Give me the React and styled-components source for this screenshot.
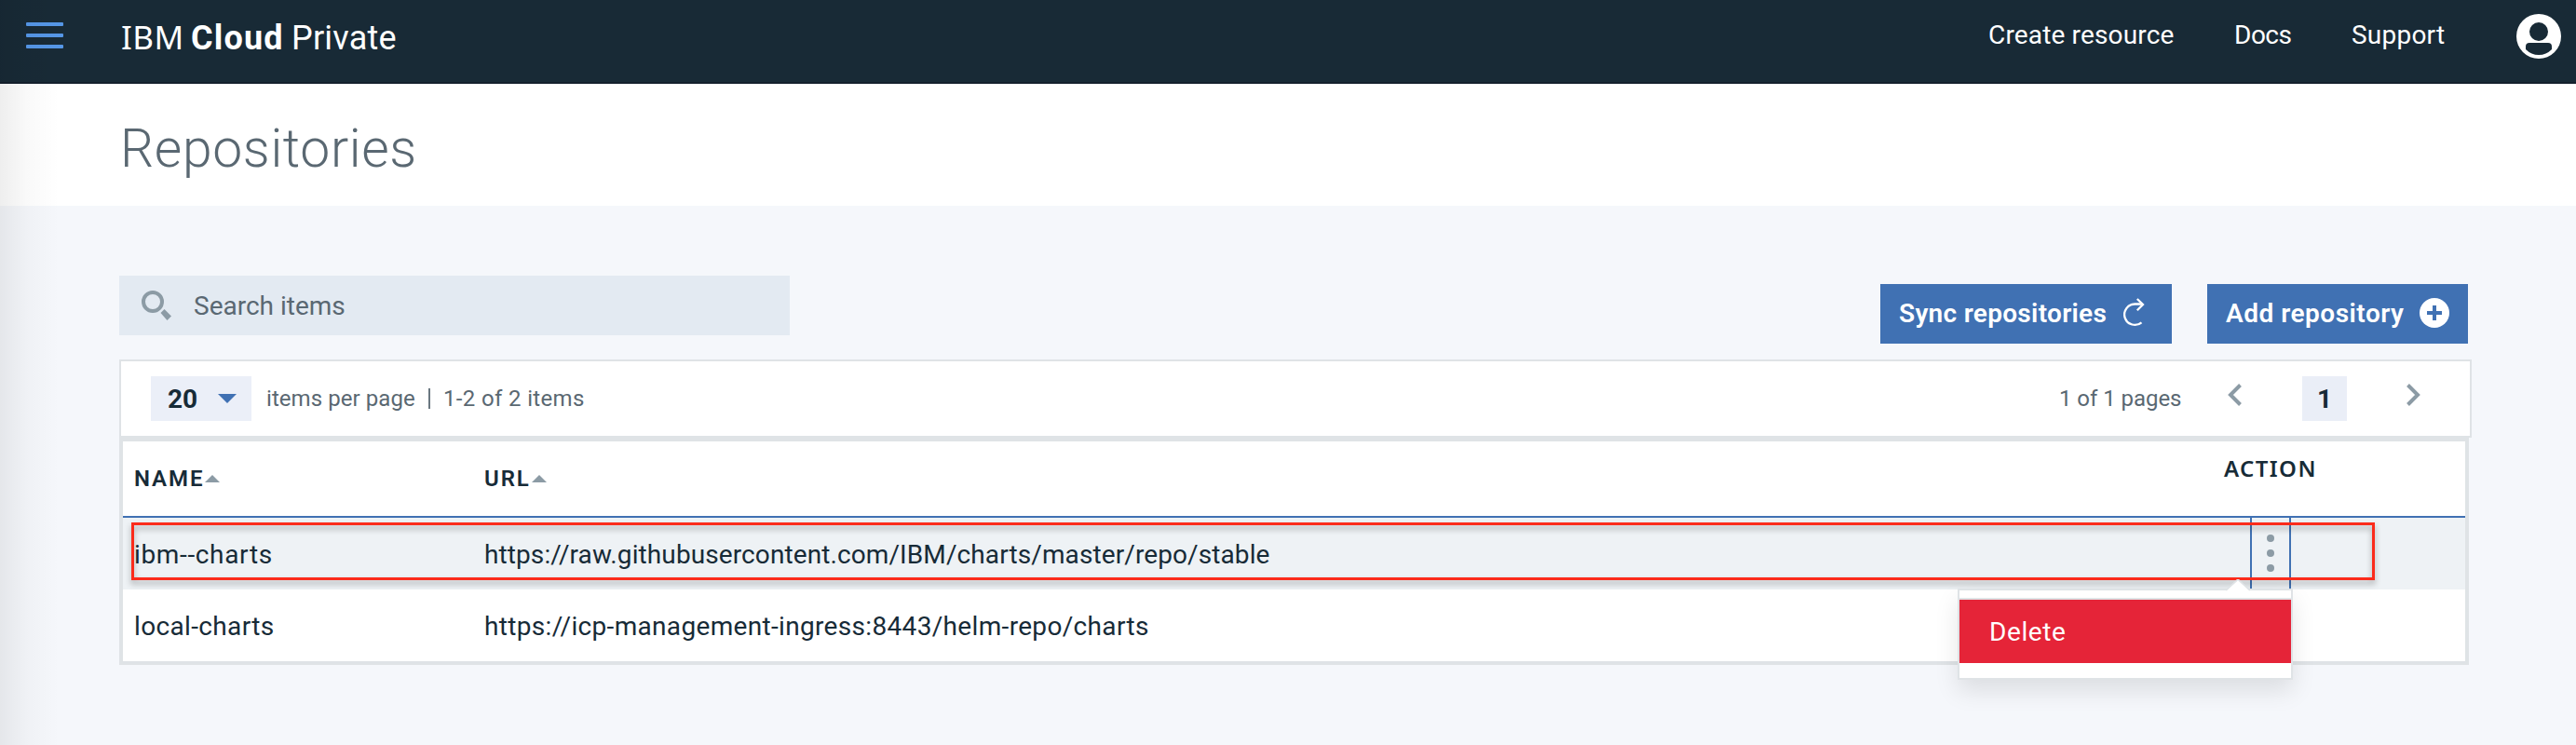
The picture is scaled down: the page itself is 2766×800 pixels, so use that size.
import React from 'react';
import styled, { createGlobalStyle } from 'styled-components';

const GlobalStyle = createGlobalStyle`
  *, *::before, *::after { box-sizing: border-box; }
  body {
    margin: 0;
    background: #f5f7fb;
    color: #172b37;
    font-family: Roboto, "Liberation Sans", sans-serif;
    font-size: 28px;
  }
`;

const Page = styled.div`
  position: relative;
  width: 2766px;
  height: 800px;
  overflow: hidden;
`;

const EdgeShade = styled.div`
  position: absolute;
  inset: 0 auto 0 0;
  width: 64px;
  background: linear-gradient(90deg, rgba(0, 0, 0, 0.065), rgba(0, 0, 0, 0.025) 45%, rgba(0, 0, 0, 0));
  pointer-events: none;
`;

const Header = styled.header`
  display: flex;
  align-items: flex-start;
  height: 90px;
  padding-right: 16px;
  background: #182a36;
  border-bottom: 2px solid #14202d;
  color: #fff;
`;

const MenuButton = styled.button`
  display: flex;
  flex-direction: column;
  gap: 8px;
  width: 40px;
  margin: 24px 62px 0 28px;
  padding: 0;
  border: 0;
  background: none;
`;

const MenuBar = styled.span`
  height: 4px;
  border-radius: 1px;
  background: #5596e6;
`;

const Brand = styled.div`
  display: flex;
  flex: 1;
  align-items: baseline;
  padding-top: 19px;
  font-size: 36px;
  line-height: 42px;
`;

const BrandPart = styled.span`
  width: ${(p) => p.$width}px;
  font-family: ${(p) => p.$family || 'inherit'};
  font-size: ${(p) => p.$size || 36}px;
  font-weight: ${(p) => p.$weight || 400};
  letter-spacing: ${(p) => p.$spacing}px;
  white-space: nowrap;
`;

const Nav = styled.nav`
  display: flex;
  padding-top: 20px;
`;

const NavLink = styled.a`
  width: ${(p) => p.$width}px;
  line-height: 36px;
  letter-spacing: ${(p) => p.$spacing}px;
  white-space: nowrap;
`;

const Avatar = styled.svg`
  display: block;
  width: 48px;
  height: 48px;
  margin-top: 15px;
`;

const TitleBand = styled.div`
  height: 131px;
  padding: 35px 0 0 129px;
  background: #fff;
`;

const Title = styled.h1`
  margin: 0;
  color: #5a6872;
  font-size: 57px;
  font-weight: 300;
  line-height: 70px;
  letter-spacing: 0.65px;
`;

const Main = styled.main`
  padding: 75px 112px 0 128px;
`;

const Toolbar = styled.div`
  display: flex;
  align-items: flex-start;
  justify-content: space-between;
  height: 90px;
  padding-right: 4px;
`;

const SearchBox = styled.div`
  display: flex;
  align-items: center;
  gap: 24px;
  width: 720px;
  height: 64px;
  padding-left: 24px;
  background: #e3eaf2;
  color: #5a6872;
`;

const SearchIcon = styled.svg`
  width: 32px;
  height: 32px;
`;

const Actions = styled.div`
  display: flex;
  gap: 38px;
  padding-top: 9px;
`;

const ActionButton = styled.button`
  display: flex;
  align-items: center;
  justify-content: space-between;
  width: ${(p) => p.$width}px;
  height: 64px;
  padding: 0 20px 2px;
  border: 0;
  background: #4071b3;
  color: #fff;
  font: 600 28px Roboto, "Liberation Sans", sans-serif;
  letter-spacing: ${(p) => p.$spacing}px;
  white-space: nowrap;

  svg {
    width: 32px;
    height: 32px;
  }
`;

const Pagination = styled.div`
  display: flex;
  align-items: center;
  width: 2526px;
  height: 84px;
  padding: 0 52px 0 32px;
  border: 2px solid #dfe3e6;
  background: #fff;
  color: #5a6872;
  font-size: 24px;
`;

const PageSize = styled.div`
  display: flex;
  align-items: center;
  justify-content: space-between;
  width: 108px;
  height: 48px;
  padding: 0 16px 0 18px;
  background: #ebeff8;
  color: #172b37;
  font-size: 28px;
  font-weight: 700;
`;

const Caret = styled.svg`
  width: 20px;
  height: 10px;
`;

const PageNote = styled.span`
  width: ${(p) => p.$width}px;
  margin-left: ${(p) => p.$left || 0}px;
  letter-spacing: ${(p) => p.$spacing || 0}px;
  white-space: nowrap;
`;

const Divider = styled.span`
  width: 2px;
  height: 22px;
  margin: 0 14px 0 0;
  background: #6a7780;
`;

const Spacer = styled.span`
  flex: 1;
`;

const Chevron = styled.svg`
  width: 16px;
  height: 24px;
  margin-bottom: 8px;
`;

const PageNumber = styled.span`
  width: 48px;
  height: 48px;
  margin: 0 64px 0 65px;
  background: #eaeef7;
  color: #172b37;
  font-size: 28px;
  font-weight: 700;
  line-height: 50px;
  text-align: center;
`;

const Table = styled.section`
  position: relative;
  width: 2523px;
  border: 4px solid #dfe3e6;
  background: #fff;
`;

const Row = styled.div`
  display: grid;
  grid-template-columns: 376px 1872px 1fr;
  height: ${(p) => p.$height || 77}px;
  background: ${(p) => (p.$active ? '#eef2f5' : '#fff')};
`;

const HeadRow = styled(Row)`
  border-bottom: 2px solid #4071b3;
  font-size: 24px;
  font-weight: 600;
`;

const HeadCell = styled.div`
  display: flex;
  align-items: center;
  gap: 1px;
  padding: ${(p) => p.$pad};
  font-family: ${(p) => p.$family || 'inherit'};
  letter-spacing: ${(p) => p.$spacing || 1.9}px;
`;

const SortArrow = styled.svg`
  width: 16px;
  height: 8px;
`;

const Cell = styled.div`
  display: flex;
  align-items: center;
  padding: 2px 0 0 12px;
  letter-spacing: ${(p) => p.$spacing || 0}px;
  white-space: nowrap;
`;

const Overflow = styled.button`
  display: flex;
  flex-direction: column;
  align-items: center;
  gap: 8px;
  width: 44px;
  height: 100%;
  margin-left: 36px;
  padding: 18px 0 0;
  border: solid #4071b3;
  border-width: 0 2px;
  background: none;
`;

const Dot = styled.span`
  width: 8px;
  height: 8px;
  border-radius: 50%;
  background: #8c9ba5;
`;

/* Annotation frame drawn over the active row */
const Highlight = styled.div`
  position: absolute;
  left: 9px;
  top: 87px;
  width: 2409px;
  height: 62px;
  border: 3px solid #fb2b1b;
  filter: drop-shadow(0 4px 3px rgba(0, 0, 0, 0.32));
  pointer-events: none;
`;

const Menu = styled.div`
  position: absolute;
  left: 1970px;
  top: 158px;
  width: 360px;
  height: 98px;
  padding-top: 8px;
  border: 2px solid #dfe3e6;
  background: #fff;
  box-shadow: 0 12px 24px rgba(0, 0, 0, 0.1);
`;

const MenuPointer = styled.svg`
  position: absolute;
  left: 286px;
  top: -12px;
  width: 26px;
  height: 13px;
`;

const MenuItem = styled.div`
  height: 70px;
  padding-left: 32px;
  border-top: 2px solid #dfe3e6;
  background: #e52438;
  color: #fff;
  line-height: 70px;
  letter-spacing: 0.6px;
`;

const repositories = [
  {
    name: 'ibm--charts',
    url: 'https://raw.githubusercontent.com/IBM/charts/master/repo/stable',
    nameSpacing: 0.65,
    urlSpacing: 0.1,
    active: true,
  },
  {
    name: 'local-charts',
    url: 'https://icp-management-ingress:8443/helm-repo/charts',
    nameSpacing: 0.35,
    urlSpacing: 0.33,
  },
];

const Sort = () => (
  <SortArrow viewBox="0 0 16 8">
    <path d="M0 8 8 0l8 8z" fill="#8c9ba5" />
  </SortArrow>
);

export default function App() {
  return (
    <Page>
      <GlobalStyle />
      <Header>
        <MenuButton aria-label="Menu">
          <MenuBar />
          <MenuBar />
          <MenuBar />
        </MenuButton>
        <Brand>
          <BrandPart $width={75} $family='"Noto Sans", sans-serif' $size={35} $spacing={0.44}>IBM</BrandPart>
          <BrandPart $width={108} $weight={700} $spacing={1.2}>Cloud</BrandPart>
          <BrandPart $width={120} $spacing={0.2}>Private</BrandPart>
        </Brand>
        <Nav>
          <NavLink $width={264} $spacing={0.16}>Create resource</NavLink>
          <NavLink $width={126} $spacing={-0.5}>Docs</NavLink>
          <NavLink $width={177} $spacing={0.23}>Support</NavLink>
        </Nav>
        <Avatar viewBox="0 0 48 48">
          <circle cx="24" cy="24" r="24" fill="#fff" />
          <circle cx="24" cy="19" r="10" fill="#182a36" />
          <path d="M14 31h20q4 0 4 4v3q-6 6-14 6t-14-6v-3q0-4 4-4z" fill="#182a36" />
        </Avatar>
      </Header>
      <TitleBand>
        <Title>Repositories</Title>
      </TitleBand>
      <Main>
        <Toolbar>
          <SearchBox>
            <SearchIcon viewBox="0 0 32 32" fill="none">
              <circle cx="12" cy="12" r="10" stroke="#8c9ba5" strokeWidth="4" />
              <path d="m20.500 24 4-4 7.500 7.500-4.500 4.500z" fill="#8c9ba5" />
            </SearchIcon>
            <span>Search items</span>
          </SearchBox>
          <Actions>
            <ActionButton $width={313} $spacing={0.3}>
              Sync repositories
              <svg viewBox="0 0 32 32" fill="none" stroke="#fff" strokeWidth="2.3">
                <path d="M19.500 26.300A11.200 11.200 0 1 1 12.300 6.500H21" />
                <path d="m14.800 1 6.200 6-6.200 6.200" />
              </svg>
            </ActionButton>
            <ActionButton $width={280} $spacing={0.5}>
              Add repository
              <svg viewBox="0 0 32 32">
                <circle cx="16" cy="16" r="16" fill="#fff" />
                <path d="M14 8h4v6h6v4h-6v6h-4v-6H8v-4h6z" fill="#4071b3" />
              </svg>
            </ActionButton>
          </Actions>
        </Toolbar>
        <Pagination>
          <PageSize>
            20
            <Caret viewBox="0 0 20 10">
              <path d="M0 0h20L10 10z" fill="#4071b3" />
            </Caret>
          </PageSize>
          <PageNote $left={16} $width={174} $spacing={0.07}>items per page</PageNote>
          <Divider />
          <PageNote $width={160} $spacing={0.35}>1-2 of 2 items</PageNote>
          <Spacer />
          <PageNote $width={180} $spacing={-0.05}>1 of 1 pages</PageNote>
          <Chevron viewBox="0 0 16 24" fill="none" stroke="#8c9ba5" strokeWidth="4">
            <path d="M14.500 1.500 4 12l10.500 10.500" />
          </Chevron>
          <PageNumber>1</PageNumber>
          <Chevron viewBox="0 0 16 24" fill="none" stroke="#8c9ba5" strokeWidth="4">
            <path d="M1.500 1.500 12 12 1.500 22.500" />
          </Chevron>
        </Pagination>
        <Table>
          <HeadRow $height={82}>
            <HeadCell $pad="0 0 0 12px">NAME<Sort /></HeadCell>
            <HeadCell $pad="0 0 0 12px">URL<Sort /></HeadCell>
            <HeadCell $pad="0 0 23px 8px" $family='"Noto Sans", sans-serif' $spacing={1.4}>ACTION</HeadCell>
          </HeadRow>
          {repositories.map((repo) => (
            <Row key={repo.name} $active={repo.active}>
              <Cell $spacing={repo.nameSpacing}>{repo.name}</Cell>
              <Cell $spacing={repo.urlSpacing}>{repo.url}</Cell>
              <div>
                {repo.active && (
                  <Overflow aria-label="Actions">
                    <Dot />
                    <Dot />
                    <Dot />
                  </Overflow>
                )}
              </div>
            </Row>
          ))}
          <Highlight />
          <Menu>
            <MenuPointer viewBox="0 0 26 13">
              <path d="M0 13 13 1l13 12z" fill="#fff" />
              <path d="M0 12 13 0l13 12" fill="none" stroke="#dfe3e6" strokeWidth="1.500" />
            </MenuPointer>
            <MenuItem>Delete</MenuItem>
          </Menu>
        </Table>
      </Main>
      <EdgeShade />
    </Page>
  );
}
